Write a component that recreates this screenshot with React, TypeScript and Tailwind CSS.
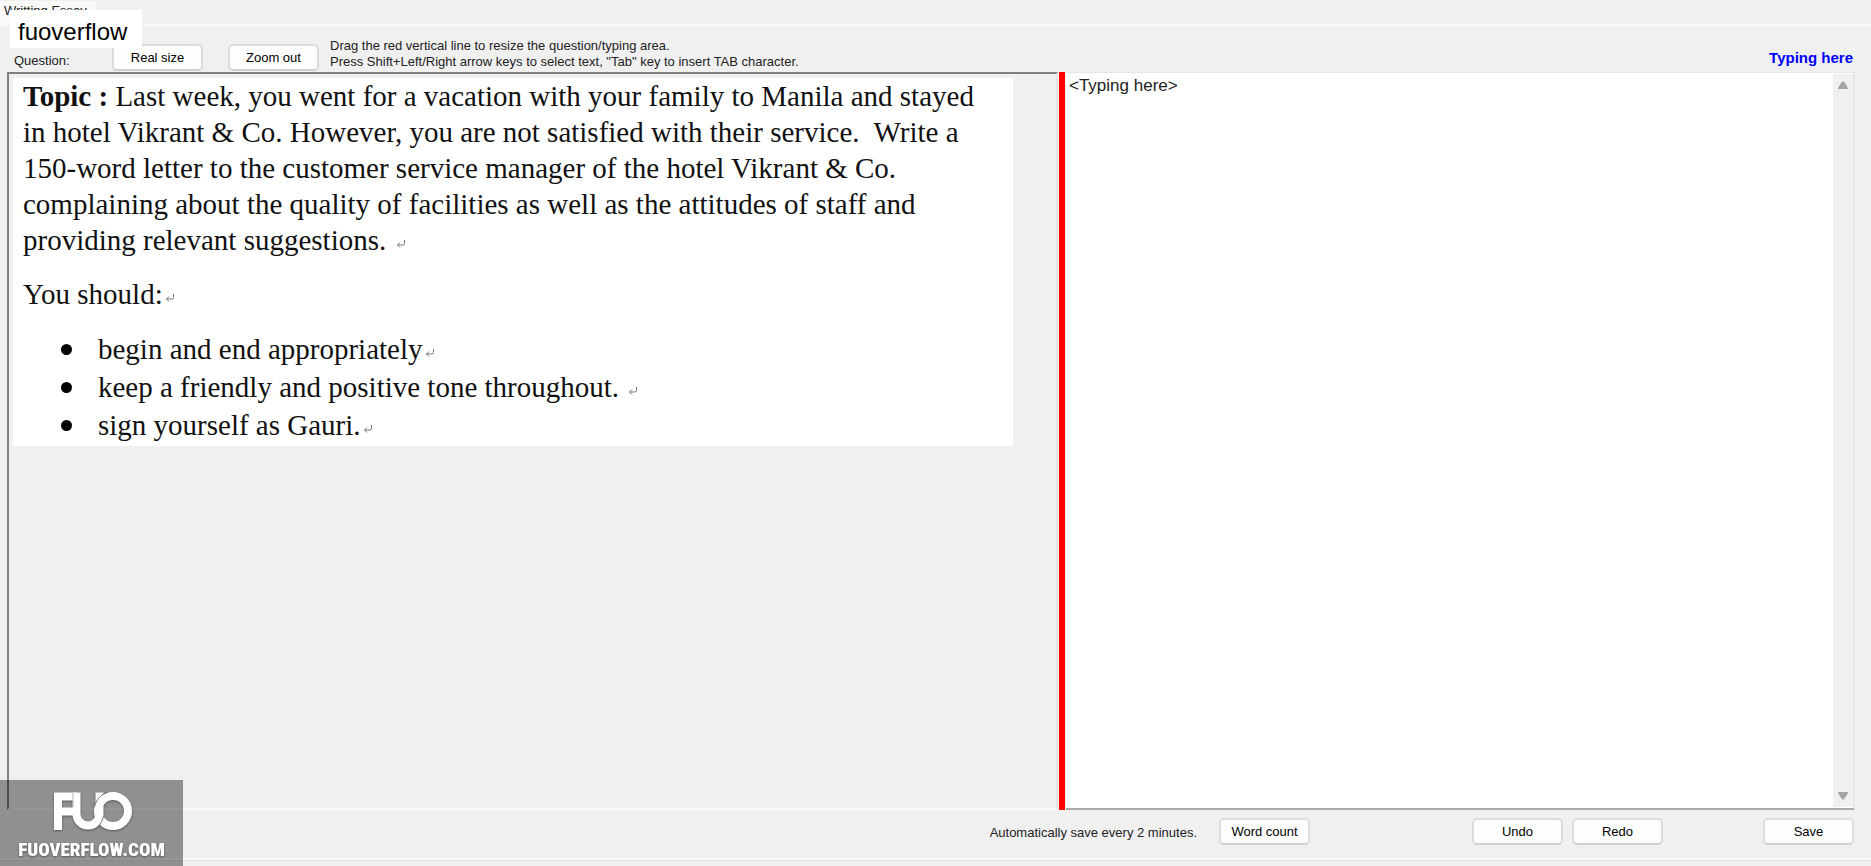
import { FC, ReactNode } from "react";
import clsx from "clsx";

interface ToolButtonProps {
  children: ReactNode;
  className?: string;
}

const ToolButton: FC<ToolButtonProps> = ({ children, className }) => (
  <button
    type="button"
    className={clsx(
      "h-[27px] w-[91px] shrink-0 rounded-[5px] border-2 border-[#dcdcdc] border-b-[#d0d0d0] bg-[#fdfdfd] text-center leading-[23px] text-black",
      className
    )}
  >
    {children}
  </button>
);

const ReturnMark: FC = () => (
  <svg
    viewBox="0 0 10 11"
    className="ml-[2px] inline-block h-[11px] w-[10px] align-baseline"
    fill="none"
    stroke="#777"
    aria-hidden="true"
  >
    <path d="M8.500 1v3.500q0 1.500-1.500 1.500H1.500M4 3.500 1.500 6 4 8.500" />
  </svg>
);

const points = [
  "begin and end appropriately",
  "keep a friendly and positive tone throughout.\u00a0",
  "sign yourself as Gauri.",
];

const Question: FC = () => (
  <section className="min-w-0 flex-[1043] border-2 border-t-[#808080] border-l-[#808080] border-r-[#e6e6e6] border-b-[#f8f8f8] pt-1 pl-1">
    <article className="mr-[43px] h-[368px] bg-white pr-5 pl-[10px] font-['Liberation_Serif',serif] text-[29px] leading-[36px] text-[#111]">
      <p>
        <b>Topic :</b> Last week, you went for a vacation with your family to
        Manila and stayed in hotel Vikrant &amp; Co. However, you are not
        satisfied with their service.&nbsp; Write a 150-word letter to the
        customer service manager of the hotel Vikrant &amp; Co. complaining
        about the quality of facilities as well as the attitudes of staff and
        providing relevant suggestions. <ReturnMark />
      </p>
      <p className="mt-[18px]">
        You should:
        <ReturnMark />
      </p>
      <ul className="mt-[18px] leading-[38px]">
        {points.map((point) => (
          <li key={point} className="flex items-center">
            <span className="mr-[26px] ml-[38px] size-[11px] rounded-full bg-black" />
            <span>
              {point}
              <ReturnMark />
            </span>
          </li>
        ))}
      </ul>
    </article>
  </section>
);

const Editor: FC = () => (
  <section className="flex min-w-0 flex-[787] border-t border-r-2 border-b-2 border-t-[#e6e6e6] border-r-[#e8e8e8] border-b-[#a8a8a8] bg-white">
    <textarea
      aria-label="Typing area"
      defaultValue="<Typing here>"
      className="min-w-0 flex-1 resize-none px-[3px] pt-[3px] text-[17px] leading-[20px] text-[#222] outline-none"
    />
    <div className="my-px flex w-5 flex-col items-center justify-between bg-[#f0f0f0] py-[7px]">
      <svg viewBox="0 0 10 8" className="h-2 w-[10px]" fill="#a3a3a3">
        <path d="M4 .5h2L10 7v1H0V7z" />
      </svg>
      <svg viewBox="0 0 10 8" className="h-2 w-[10px]" fill="#a3a3a3">
        <path d="M4 7.500h2L10 1V0H0v1z" />
      </svg>
    </div>
  </section>
);

const Watermark: FC = () => (
  <div className="absolute bottom-0 left-0 flex h-[86px] w-[183px] flex-col items-center bg-black/40 pt-[12px] text-white">
    <svg
      viewBox="0 0 78 38"
      className="ml-[2px] h-[38px] w-[78px] drop-shadow-[0_1px_1px_rgba(0,0,0,0.4)]"
      fill="none"
      stroke="white"
      strokeWidth="8"
      aria-hidden="true"
    >
      <path d="M4 38V4.500H22M8 19.500H19" />
      <path d="M22.500 .5V22a11.500 11.500 0 0 0 23 0V.5" />
      <circle cx="59" cy="19" r="15" />
      <path d="M19 .5V15" stroke="#999" strokeWidth=".7" />
      <path d="M40.500 15C42 8 47 2 54 .3" stroke="#777" strokeWidth="1" />
      <path d="M49.500 24q-.5 5-4 9" stroke="#777" strokeWidth="1" />
    </svg>
    <span className="mt-[8px] font-['Liberation_Sans_Narrow','Roboto_Condensed','Roboto',sans-serif] text-[19px] leading-[24px] font-black drop-shadow-[0_1px_1px_rgba(0,0,0,0.4)]">
      FUOVERFLOW.COM
    </span>
  </div>
);

const App: FC = () => {
  return (
    <main className="relative flex h-screen flex-col overflow-hidden bg-[#f0f0f0] font-['Liberation_Sans',sans-serif] text-[13px] leading-[16px] text-[#222]">
      <header className="h-[26px] border-b-2 border-[#f8f8f8] pt-px">
        <div className="h-[25px] w-24 bg-[#f9f9f9] pt-[2px] pl-1">
          Writting Essay
        </div>
      </header>

      <div className="flex h-[46px] items-end pr-[18px] pb-px pl-[14px]">
        <span className="mb-[2px] w-[98px]">Question:</span>
        <ToolButton>Real size</ToolButton>
        <ToolButton className="ml-[25px]">Zoom out</ToolButton>
        <p className="mb-px ml-[11px]">
          Drag the red vertical line to resize the question/typing area.
          <br />
          Press Shift+Left/Right arrow keys to select text, "Tab" key to insert
          TAB character.
        </p>
        <span className="mb-[5px] ml-auto text-[15px] font-bold text-[#0000ff]">
          Typing here
        </span>
      </div>

      <div className="flex min-h-0 flex-1 pr-4 pl-[7px]">
        <Question />
        <div className="mx-px w-[6px] shrink-0 cursor-col-resize bg-[#ff0000]" />
        <Editor />
      </div>

      <footer className="flex h-[50px] items-start justify-end border-b-2 border-[#fafafa] pt-2 pr-[17px]">
        <span className="mt-[7px]">Automatically save every 2 minutes.</span>
        <ToolButton className="ml-[22px]">Word count</ToolButton>
        <ToolButton className="ml-[162px]">Undo</ToolButton>
        <ToolButton className="ml-[9px]">Redo</ToolButton>
        <ToolButton className="ml-[100px]">Save</ToolButton>
      </footer>
      <div className="h-[6px] border-t border-[#e4e4e4]" />

      <div className="absolute top-[10px] left-[10px] h-[38px] bg-white pr-[15px] pl-2 text-[24px] leading-[43px] text-black">
        fuoverflow
      </div>
      <Watermark />
    </main>
  );
};

export default App;
